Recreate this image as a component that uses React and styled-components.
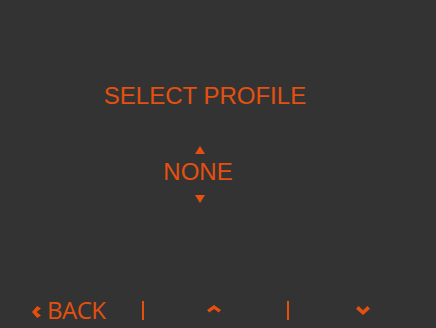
import React from 'react';
import styled, { createGlobalStyle } from 'styled-components';

const ACCENT = '#e5500f';

const GlobalStyle = createGlobalStyle`
  html, body {
    margin: 0;
    padding: 0;
    background: #333333;
  }
`;

const Screen = styled.div`
  width: 436px;
  height: 328px;
  box-sizing: border-box;
  display: flex;
  flex-direction: column;
  background: #333333;
  color: ${ACCENT};
  overflow: hidden;
`;

const Body = styled.div`
  width: 410px;
  display: flex;
  flex-direction: column;
  align-items: center;
  padding-top: 82px;
`;

const Title = styled.div`
  font-family: "Liberation Sans", Arial, sans-serif;
  font-size: 24px;
  line-height: 28px;
  white-space: nowrap;
`;

const Selector = styled.div`
  align-self: center;
  margin-right: 14px;
  margin-top: 36px;
  display: flex;
  flex-direction: column;
  align-items: center;
`;

const Arrow = styled.div`
  width: 0;
  height: 0;
  margin-left: 4px;
  border-left: 5.5px solid transparent;
  border-right: 5.5px solid transparent;
  ${p => p.down
    ? `border-top: 8px solid ${ACCENT}; margin-top: 9px;`
    : `border-bottom: 8px solid ${ACCENT}; margin-bottom: 4px;`}
`;

const Value = styled.div`
  font-family: "Liberation Sans", Arial, sans-serif;
  font-size: 24px;
  line-height: 28px;
`;

const NavBar = styled.div`
  margin-top: auto;
  margin-bottom: 6px;
  padding-left: 32px;
  display: grid;
  grid-template-columns: repeat(5, 73.5px);
  justify-items: center;
  align-items: center;
  height: 24px;
`;

const BackButton = styled.div`
  display: flex;
  align-items: center;
  gap: 6px;
  font-family: "Open Sans", "Noto Sans", sans-serif;
  font-size: 24px;
  line-height: 24px;
  letter-spacing: -0.5px;
`;

const Separator = styled.div`
  width: 2px;
  height: 19px;
  background: ${ACCENT};
  margin-left: ${p => p.shift || 0}px;
`;

const Icon = styled.svg`
  display: block;
  flex: none;
  fill: ${ACCENT};
  margin-top: ${p => p.drop || 0}px;
  margin-left: ${p => p.shift || 0}px;
`;

const ChevronLeft = () => (
  <Icon width="9" height="12" viewBox="0 0 9 12" drop={4}>
    <polygon points="5.2,0 9,2.4 4.6,6 9,9.6 5.2,12 0,6" />
  </Icon>
);

const ChevronUp = () => (
  <Icon width="14" height="8" viewBox="0 0 14 8" drop={-3} shift={-3}>
    <polygon points="7,0 14,5 11.8,7.6 7,4 2.2,7.6 0,5" />
  </Icon>
);

const ChevronDown = () => (
  <Icon width="14" height="9" viewBox="0 0 14 9">
    <polygon points="0,2.8 2.6,0 7,4.2 11.4,0 14,2.8 7,9" />
  </Icon>
);

export default function App() {
  return (
    <>
      <GlobalStyle />
      <Screen>
        <Body>
          <Title>SELECT PROFILE</Title>
          <Selector>
            <Arrow />
            <Value>NONE</Value>
            <Arrow down />
          </Selector>
        </Body>
        <NavBar>
          <BackButton>
            <ChevronLeft />
            <span>BACK</span>
          </BackButton>
          <Separator shift={2} />
          <ChevronUp />
          <Separator shift={-2} />
          <ChevronDown />
        </NavBar>
      </Screen>
    </>
  );
}
